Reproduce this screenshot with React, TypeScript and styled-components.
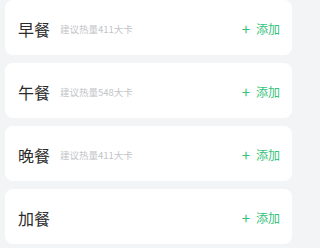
import styled, { createGlobalStyle } from "styled-components"

const GlobalStyle = createGlobalStyle`
body {
    margin: 0;
    background: #f3f4f6;
    font-family: "Noto Sans CJK SC", "Noto Sans", sans-serif;
}
`

const MealList = styled.div`
width: 300px;
box-sizing: border-box;
display: flex;
flex-direction: column;
gap: 8px;
padding: 0 8px 0 5px;
`

const MealCard = styled.div`
height: 55px;
display: flex;
flex-direction: row;
align-items: center;
padding: 0 12px 0 13px;
background: #ffffff;
border-radius: 8px;
`

const MealTitle = styled.span`
font-size: 16px;
color: #2b2b2b;
line-height: 1;
margin-top: 2px;
`

const MealHint = styled.span`
font-size: 9.5px;
color: #c2c4c8;
margin-left: 10px;
margin-top: 2px;
`

const AddButton = styled.button`
margin-left: auto;
display: flex;
align-items: center;
gap: 6px;
border: none;
background: none;
padding: 0;
font-family: inherit;
font-size: 12px;
color: #35c27a;
margin-top: 2px;
`

const Plus = styled.span`
font-size: 15px;
line-height: 1;
`

const meals = [
    { name: "早餐", hint: "建议热量411大卡" },
    { name: "午餐", hint: "建议热量548大卡" },
    { name: "晚餐", hint: "建议热量411大卡" },
    { name: "加餐", hint: "" },
]

export default function App() {
    return (
        <>
            <GlobalStyle />
            <MealList>
                {meals.map(meal => (
                    <MealCard key={meal.name}>
                        <MealTitle>{meal.name}</MealTitle>
                        {meal.hint && <MealHint>{meal.hint}</MealHint>}
                        <AddButton>
                            <Plus>+</Plus>
                            添加
                        </AddButton>
                    </MealCard>
                ))}
            </MealList>
        </>
    )
}
